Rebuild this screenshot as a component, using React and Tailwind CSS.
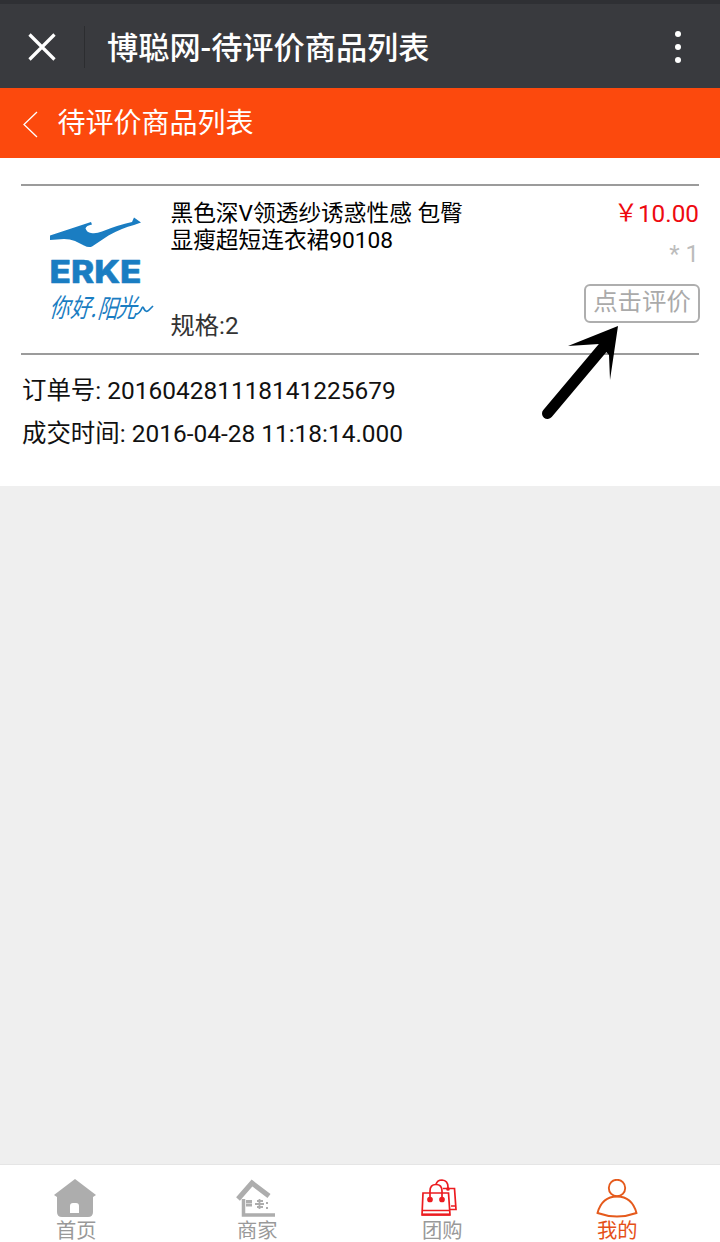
import React from 'react';

const TopBar = ({ title }) => {
  return (
    <header className="h-[88px] border-t-4 border-[#2f3034] bg-[#393a3e] flex items-center pt-[2px] text-white">
      <svg className="ml-7 size-7 shrink-0" viewBox="0 0 28 28" fill="none" stroke="currentColor" strokeWidth="3.2">
        <path d="M1.5 1.5 26.5 26.5M26.5 1.5 1.5 26.5" />
      </svg>
      <div className="ml-7 h-[42px] w-px bg-[#2c2d30]"></div>
      <h1 className="ml-[22px] mt-[3px] text-[31.2px] leading-10 font-medium whitespace-nowrap">{title}</h1>
      <div className="ml-auto mr-[39px] flex flex-col gap-[7px]">
        <span className="size-1.5 rounded-full bg-white"></span>
        <span className="size-1.5 rounded-full bg-white"></span>
        <span className="size-1.5 rounded-full bg-white"></span>
      </div>
    </header>
  );
};

const PageBar = ({ title }) => {
  return (
    <div className="h-[70px] bg-[#fc490d] flex items-center text-white">
      <svg className="ml-[23px] mt-[3px] w-[15px] h-[27px] shrink-0" viewBox="0 0 15 27" fill="none" stroke="currentColor" strokeWidth="1.3">
        <path d="M14 1 1 13.5 14 26" />
      </svg>
      <h2 className="ml-[19.5px] mt-[2px] text-[28px] leading-10 whitespace-nowrap">{title}</h2>
    </div>
  );
};

const BrandLogo = () => {
  return (
    <svg className="w-[122px] h-[126px] overflow-visible" viewBox="0 0 122 126" fill="#1a7dc2">
      <path d="M10 25.5 51 12 52 14.5Q46 15.5 45.5 18.5 47 22.5 51 23 56 24 62 21.5 78 15 92 12L94 7.5 101 12.5 94 15Q82 18 68.5 25.5L52 36.5Q48.5 38 44 35.5L35 31Q30 29 24 29L10 30Z" />
      <text x="9.5" y="72.5" textLength="92" lengthAdjust="spacingAndGlyphs" stroke="#1a7dc2" strokeWidth="0.5" strokeLinejoin="round" className="font-[Inter] text-[31px] font-extrabold">ERKE</text>
      <g transform="translate(9 107) skewX(-16) scale(0.78 1)">
        <text x="0 27 53 62 86" y="0 0 0 1 0" className="font-['Noto_Sans_CJK_SC',sans-serif] text-[26px] font-normal">你好.阳光</text>
      </g>
      <path d="M95 104Q99 105 102 98 103 96 104 99 106 103 109 100L113 96" fill="none" stroke="#1a7dc2" strokeWidth="1.7" />
    </svg>
  );
};

const OrderItem = () => {
  return (
    <div className="h-[171px] border-y-2 border-[#9b9b9b] flex">
      <div className="ml-[19px] mt-[24px] w-[130.5px] shrink-0">
        <BrandLogo />
      </div>
      <div className="flex-1 pt-[15px]">
        <p className="text-[22.7px] leading-[26.5px] text-black whitespace-nowrap">
          黑色深V领透纱诱惑性感 包臀
          <br />
          显瘦超短连衣裙90108
        </p>
        <p className="mt-[54px] text-[24.3px] leading-9 text-[#333]">规格:2</p>
      </div>
      <div className="flex flex-col items-end pt-2.5">
        <p className="flex text-[24.3px] leading-9 text-[#ee0a10]">
          <span className="font-['Noto_Sans_CJK_SC',sans-serif] text-[24px] -mt-[3px]">￥</span>
          <span>10.00</span>
        </p>
        <p className="mt-1 text-[24px] leading-9 text-[#bcbcbc]">* 1</p>
        <button className="mt-3 -mr-px h-[39px] w-[116px] rounded-md border-2 border-[#aeaeae] pb-[3px] flex items-center justify-center text-[24.4px] leading-8 text-[#aaa] whitespace-nowrap">
          点击评价
        </button>
      </div>
    </div>
  );
};

const Pointer = () => {
  return (
    <svg className="absolute left-[538px] top-[324px] w-[86px] h-[98px]" viewBox="0 0 86 98">
      <path d="M9.5 89.5 68 20" stroke="#000" strokeWidth="11" strokeLinecap="round" />
      <path d="M80 2 30 22 61 20 71 31 72 56Z" />
    </svg>
  );
};

const HomeIcon = () => (
  <svg className="w-[42px] h-[38px]" viewBox="0 0 42 38" fill="#adadad">
    <path d="M21 0 42 16 39 18V33Q39 38 34 38H8Q3 38 3 33V18L0 16Z" />
    <path d="M16 34V27Q16 24 19 24H22Q25 24 25 27V34Z" fill="#fff" />
  </svg>
);

const ShopIcon = () => (
  <svg className="w-[40px] h-[38px]" viewBox="0 0 40 38" fill="none" stroke="#adadad">
    <path d="M2 20 16 4 33 17" strokeWidth="5" />
    <path d="M7.5 20V36H39" strokeWidth="3.5" />
    <path d="M10 22.5h6M10 26h6" strokeWidth="2.8" />
    <path d="M19 25h9M21 22h6M21 28h6M23.5 20v10" strokeWidth="1.8" />
    <path d="M30 24h2M30 29h2" strokeWidth="2" />
  </svg>
);

const BagIcon = () => (
  <svg className="w-[36px] h-[38px]" viewBox="0 0 36 38" fill="none" stroke="#ec1c20" strokeWidth="1.7">
    <path d="M2 14H27.5L29 36H1ZM1 31.5H28" />
    <path d="M1 35.5H29" strokeWidth="2.2" />
    <path d="M9 20V12Q9 5.5 15 5.5T21 12V20" />
    <path d="M15 5.5Q16 1 21 1 27 1.5 27 8V11M22 9.5H33.5L35 30.5H29M30 27H35" />
    <circle cx="9" cy="20.5" r="2" fill="#ec1c20" />
    <circle cx="21" cy="20.5" r="2" fill="#ec1c20" />
    <circle cx="27" cy="10" r="1" fill="#ec1c20" />
  </svg>
);

const UserIcon = () => (
  <svg className="w-[42px] h-[40px]" viewBox="0 0 42 40" fill="none" stroke="#e55a1c" strokeWidth="1.9">
    <circle cx="21" cy="9" r="8.2" />
    <path d="M1.5 34Q6 17.5 21 17.5T40.5 34Q21 41 1.5 34Z" />
  </svg>
);

const tabs = [
  { label: '首页', icon: HomeIcon, place: 'pl-[54px] w-[236px]', text: 'ml-[2px] text-[#999]' },
  { label: '商家', icon: ShopIcon, place: 'w-[185px]', text: 'ml-px text-[#999]' },
  { label: '团购', icon: BagIcon, place: 'w-[175px]', text: 'ml-px text-[#999]' },
  { label: '我的', icon: UserIcon, place: '', text: 'ml-px text-[#e55017]' },
];

const TabBar = () => {
  return (
    <nav className="h-[78px] border-t border-[#e5e5e5] bg-white flex">
      {tabs.map(({ label, icon: Icon, place, text }) => (
        <a key={label} className={`${place} flex pt-[14px]`}>
          <div className="flex flex-col items-start h-[62px]">
            <div className="h-[38px]">
              <Icon />
            </div>
            <span className={`${text} text-[20.3px] leading-[20px] mt-[4px] whitespace-nowrap`}>{label}</span>
          </div>
        </a>
      ))}
    </nav>
  );
};

export default function App() {
  return (
    <div className="relative flex h-[1242px] w-[720px] flex-col overflow-hidden bg-[#efefef] font-[Roboto,'Noto_Sans_CJK_SC',sans-serif]">
      <TopBar title="博聪网-待评价商品列表" />
      <PageBar title="待评价商品列表" />
      <main className="h-[328px] bg-white px-[21px] pt-[26px]">
        <OrderItem />
        <div className="pt-[14px] pl-[1px] text-[24.45px] leading-[43px] text-[#111]">
          <p>订单号: 201604281118141225679</p>
          <p>成交时间: 2016-04-28 11:18:14.000</p>
        </div>
      </main>
      <div className="flex-1"></div>
      <TabBar />
      <Pointer />
    </div>
  );
}
